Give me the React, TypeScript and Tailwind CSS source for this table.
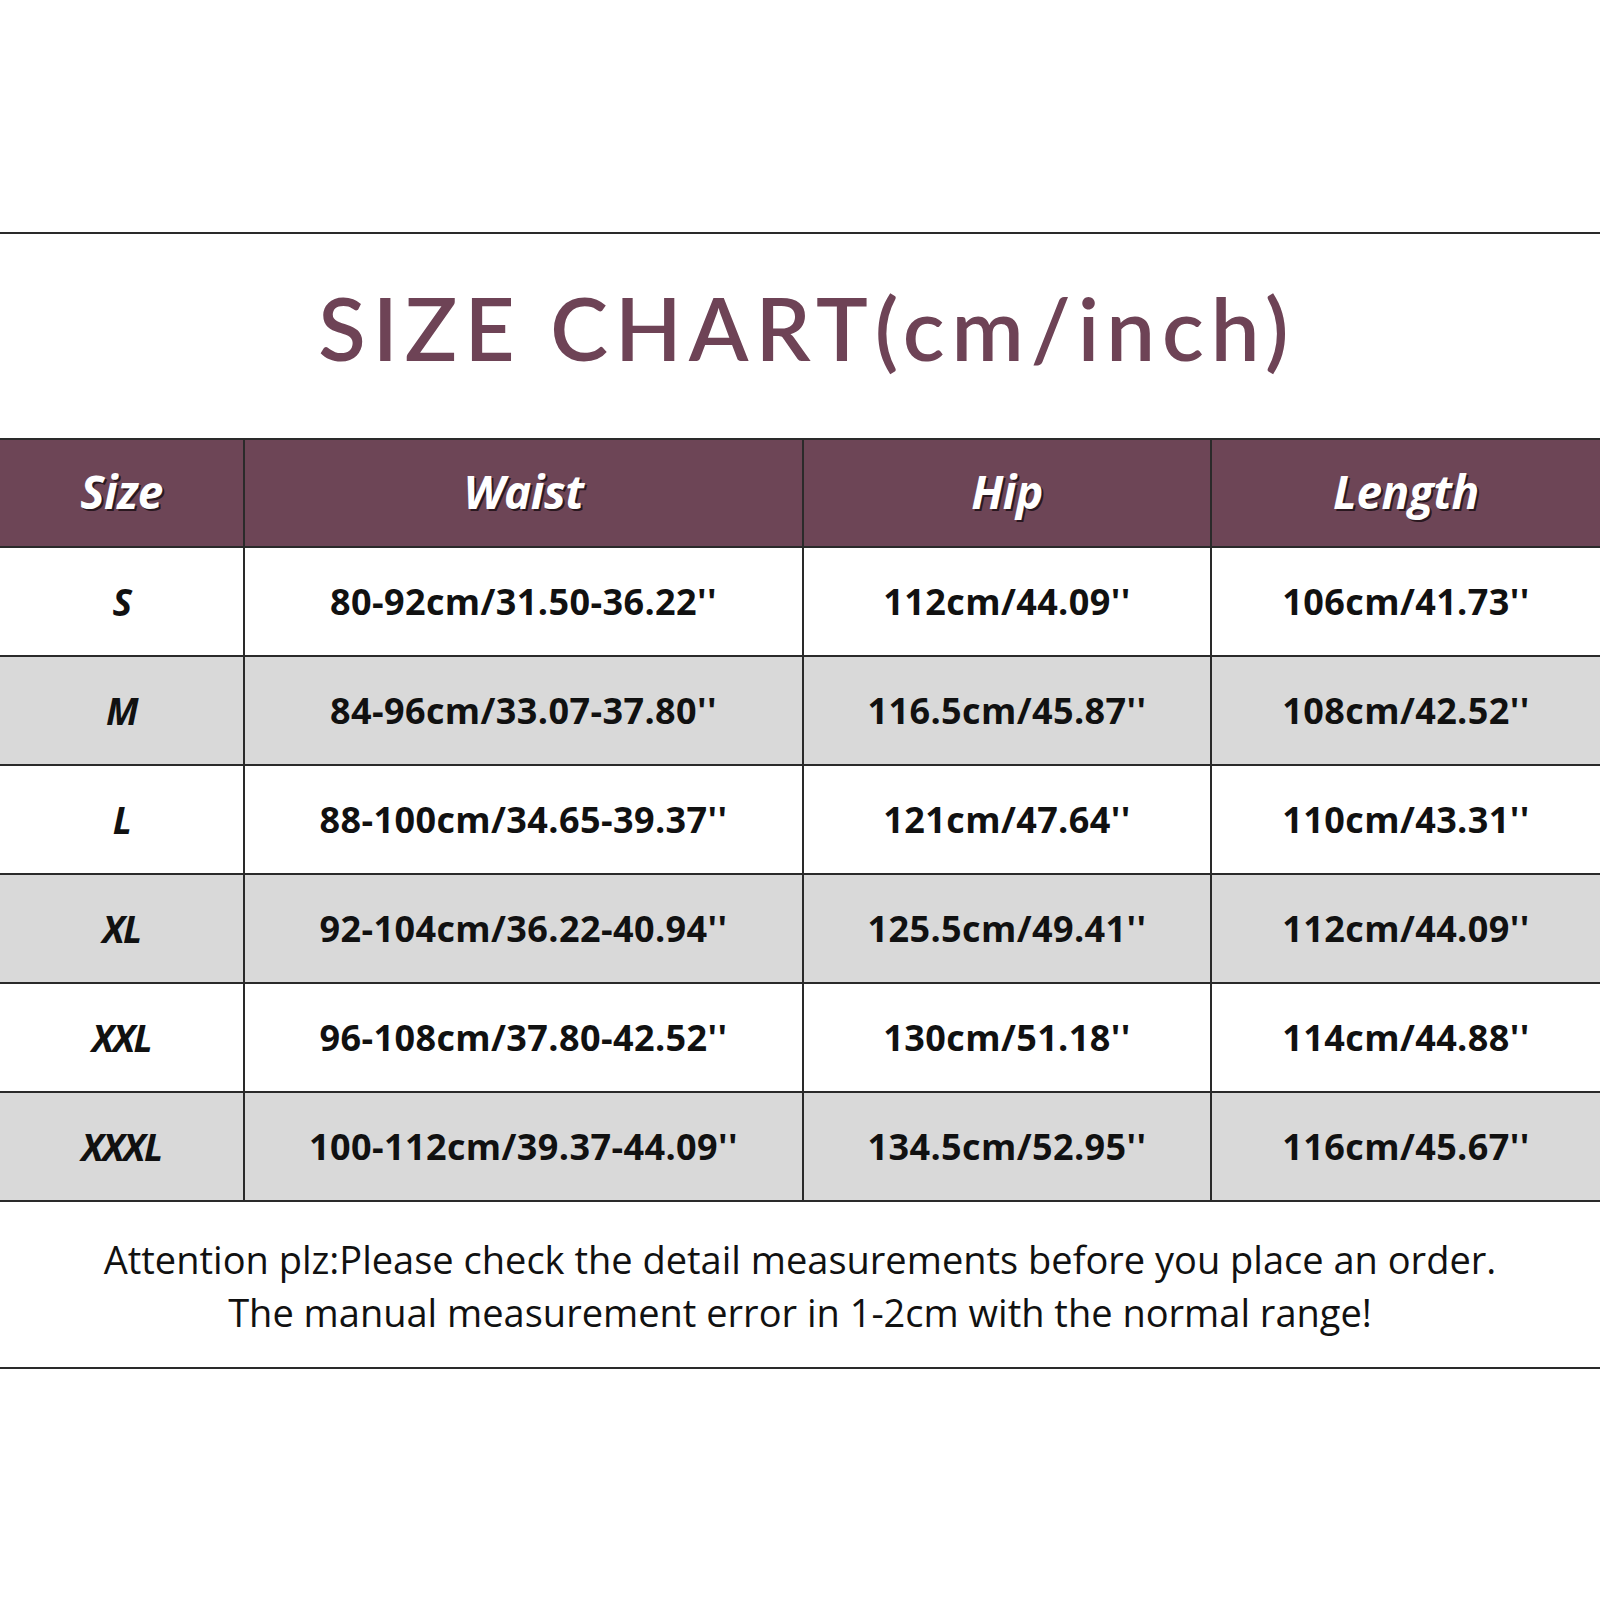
import React from "react";

const rows = [
  ["S", "80-92cm/31.50-36.22''", "112cm/44.09''", "106cm/41.73''"],
  ["M", "84-96cm/33.07-37.80''", "116.5cm/45.87''", "108cm/42.52''"],
  ["L", "88-100cm/34.65-39.37''", "121cm/47.64''", "110cm/43.31''"],
  ["XL", "92-104cm/36.22-40.94''", "125.5cm/49.41''", "112cm/44.09''"],
  ["XXL", "96-108cm/37.80-42.52''", "130cm/51.18''", "114cm/44.88''"],
  ["XXXL", "100-112cm/39.37-44.09''", "134.5cm/52.95''", "116cm/45.67''"],
];

const headers = ["Size", "Waist", "Hip", "Length"];

export default function App() {
  return (
    <div className="w-[1600px] h-[1600px] bg-white flex flex-col" style={{ fontFamily: '"Open Sans", sans-serif' }}>
      <div className="h-[232px] shrink-0" />
      <div className="h-[2px] bg-[#2a2a2a] shrink-0" />
      <div className="h-[204px] shrink-0 flex items-center justify-center">
        <h1
          className="text-[87px] leading-none text-[#6e4356] font-semibold tracking-[7px] -mt-[18px] pl-[14px]"
          style={{ fontFamily: '"Lato", sans-serif' }}
        >
          SIZE CHART(cm/inch)
        </h1>
      </div>
      <div className="grid grid-cols-[245px_559px_408px_388px] border-t-2 border-[#2a2a2a] shrink-0">
        {headers.map((h, i) => (
          <div
            key={h}
            className={`h-[108px] bg-[#6d4556] flex items-center justify-center border-b-2 border-[#2a2a2a] ${i < 3 ? "border-r-2" : ""}`}
          >
            <span className="text-white text-[46px] font-bold italic tracking-[-0.5px] -mt-[4px] [text-shadow:2px_2px_0_#2a1820]">
              {h}
            </span>
          </div>
        ))}
        {rows.map((r, ri) =>
          r.map((c, ci) => (
            <div
              key={ri + "-" + ci}
              className={`h-[109px] flex items-center justify-center border-b-2 border-[#2a2a2a] ${ci < 3 ? "border-r-2" : ""} ${ri % 2 === 1 ? "bg-[#d9d9d9]" : "bg-white"}`}
            >
              <span
                className={`text-[#111] ${ci === 0 ? "text-[37px] font-bold italic tracking-[-1.5px]" : "text-[36px] font-bold tracking-[0.4px]"}`}
              >
                {c}
              </span>
            </div>
          ))
        )}
      </div>
      <div className="h-[165px] shrink-0 flex flex-col items-center justify-center text-[38px] leading-[53px] text-[#111] tracking-[0px] pt-[2px]">
        <p>Attention plz:Please check the detail measurements before you place an order.</p>
        <p>The manual measurement error in 1-2cm with the normal range!</p>
      </div>
      <div className="h-[2px] bg-[#2a2a2a] shrink-0" />
    </div>
  );
}
